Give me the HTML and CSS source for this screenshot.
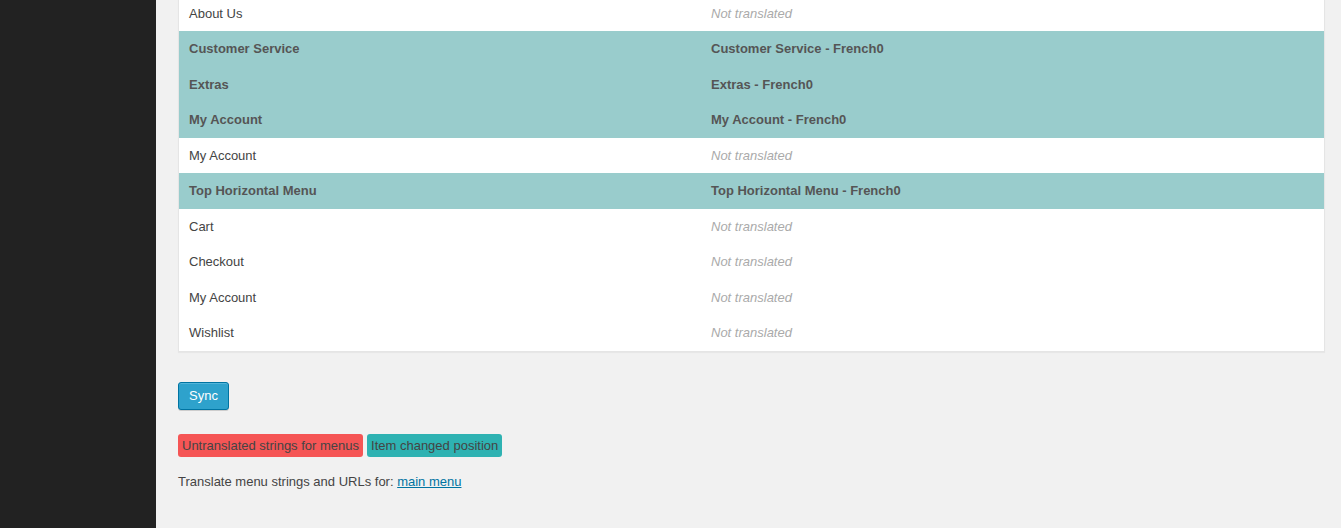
FILE: index.html
```html
<!DOCTYPE html>
<html>
<head>
<meta charset="utf-8">
<link rel="stylesheet" href="styles.css">
</head>
<body>
<div class="layout">
  <aside class="sidebar"></aside>
  <main class="content">
    <div class="table-wrap">
      <table class="menu-table">
        <colgroup><col class="col-name"><col class="col-trans"></colgroup>
        <tbody>
          <tr><td>About Us</td><td class="missing">Not translated</td></tr>
          <tr class="menu-row"><td>Customer Service</td><td>Customer Service - French0</td></tr>
          <tr class="menu-row"><td>Extras</td><td>Extras - French0</td></tr>
          <tr class="menu-row"><td>My Account</td><td>My Account - French0</td></tr>
          <tr><td>My Account</td><td class="missing">Not translated</td></tr>
          <tr class="menu-row"><td>Top Horizontal Menu</td><td>Top Horizontal Menu - French0</td></tr>
          <tr><td>Cart</td><td class="missing">Not translated</td></tr>
          <tr><td>Checkout</td><td class="missing">Not translated</td></tr>
          <tr><td>My Account</td><td class="missing">Not translated</td></tr>
          <tr><td>Wishlist</td><td class="missing">Not translated</td></tr>
        </tbody>
      </table>
    </div>
    <div class="actions">
      <button class="btn-primary" type="button">Sync</button>
    </div>
    <div class="legend">
      <span class="badge badge-red">Untranslated strings for menus</span>
      <span class="badge badge-teal">Item changed position</span>
    </div>
    <p class="note">Translate menu strings and URLs for: <a href="#">main menu</a></p>
  </main>
</div>
</body>
</html>
```

FILE: styles.css
```css
html, body {
  margin: 0;
  padding: 0;
  height: 100%;
  overflow: hidden;
}
body {
  font-family: "Liberation Sans", Arial, sans-serif;
  font-size: 13px;
  color: #444;
  background: #f1f1f1;
}
.layout {
  display: flex;
  height: 528px;
}
.sidebar {
  width: 156px;
  flex: none;
  background: #222;
}
.content {
  flex: 1;
  padding: 0 16px 0 22px;
  min-width: 0;
}
.table-wrap {
  margin-top: -5.5px;
}
.menu-table {
  width: 100%;
  table-layout: fixed;
  border-collapse: collapse;
  background: #fff;
  border: 1px solid #e5e5e5;
  box-shadow: 0 1px 1px rgba(0,0,0,.04);
}
.col-name { width: 522.5px; }
.menu-table td {
  padding: 8px 10px;
  line-height: 19.5px;
  color: #444;
  white-space: nowrap;
}
.menu-table td.missing {
  color: #aaa;
  font-style: italic;
}
.menu-row td {
  background: #99cccc;
  font-weight: bold;
  color: #555;
}
.actions {
  margin-top: 30px;
}
.btn-primary {
  font-family: inherit;
  font-size: 13px;
  height: 28px;
  line-height: 26px;
  padding: 0 10px;
  background: #2ea2cc;
  border: 1px solid #0074a2;
  border-radius: 3px;
  color: #fff;
  box-shadow: inset 0 1px 0 rgba(120,200,230,.5), 0 1px 0 rgba(0,0,0,.15);
  cursor: pointer;
}
.legend {
  margin-top: 24px;
  display: flex;
  gap: 4px;
}
.badge {
  display: inline-block;
  padding: 3px 4px;
  line-height: 17px;
  border-radius: 3px;
  color: #444;
}
.badge-red { background: #f55555; }
.badge-teal { background: #2eb2b2; }
.note {
  margin: 15px 0 0;
  line-height: 19.5px;
}
.note a {
  color: #0074a2;
}
```
